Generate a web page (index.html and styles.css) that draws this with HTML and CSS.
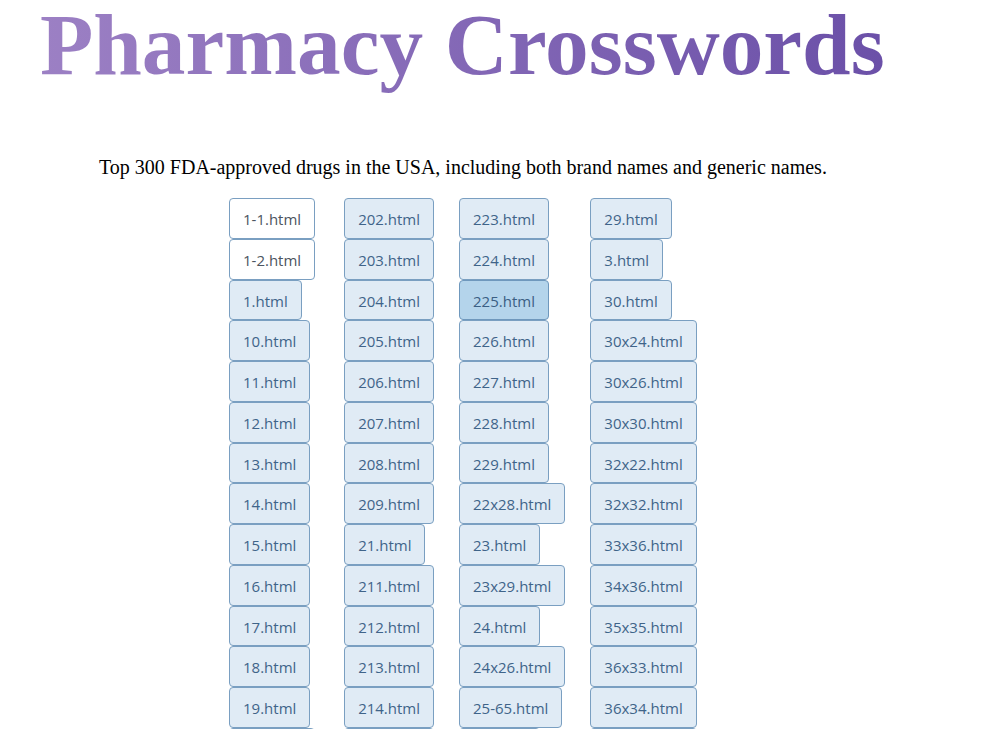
FILE: index.html
```html
<!DOCTYPE html>
<html lang="en">
<head>
<meta charset="utf-8">
<title>Pharmacy Crosswords</title>
<link rel="stylesheet" href="styles.css">
</head>
<body>
<header class="masthead">
  <h1 class="title">Pharmacy Crosswords</h1>
</header>
<p class="intro">Top 300 FDA-approved drugs in the USA, including both brand names and generic names.</p>
<main class="files">
  <ul class="col">
    <li><a class="file seen" href="1-1.html">1-1.html</a></li>
    <li><a class="file seen" href="1-2.html">1-2.html</a></li>
    <li><a class="file" href="1.html">1.html</a></li>
    <li><a class="file" href="10.html">10.html</a></li>
    <li><a class="file" href="11.html">11.html</a></li>
    <li><a class="file" href="12.html">12.html</a></li>
    <li><a class="file" href="13.html">13.html</a></li>
    <li><a class="file" href="14.html">14.html</a></li>
    <li><a class="file" href="15.html">15.html</a></li>
    <li><a class="file" href="16.html">16.html</a></li>
    <li><a class="file" href="17.html">17.html</a></li>
    <li><a class="file" href="18.html">18.html</a></li>
    <li><a class="file" href="19.html">19.html</a></li>
    <li><a class="file" href="2-1.html">2-1.html</a></li>
  </ul>
  <ul class="col">
    <li><a class="file" href="202.html">202.html</a></li>
    <li><a class="file" href="203.html">203.html</a></li>
    <li><a class="file" href="204.html">204.html</a></li>
    <li><a class="file" href="205.html">205.html</a></li>
    <li><a class="file" href="206.html">206.html</a></li>
    <li><a class="file" href="207.html">207.html</a></li>
    <li><a class="file" href="208.html">208.html</a></li>
    <li><a class="file" href="209.html">209.html</a></li>
    <li><a class="file" href="21.html">21.html</a></li>
    <li><a class="file" href="211.html">211.html</a></li>
    <li><a class="file" href="212.html">212.html</a></li>
    <li><a class="file" href="213.html">213.html</a></li>
    <li><a class="file" href="214.html">214.html</a></li>
    <li><a class="file" href="215.html">215.html</a></li>
  </ul>
  <ul class="col">
    <li><a class="file" href="223.html">223.html</a></li>
    <li><a class="file" href="224.html">224.html</a></li>
    <li><a class="file active" href="225.html">225.html</a></li>
    <li><a class="file" href="226.html">226.html</a></li>
    <li><a class="file" href="227.html">227.html</a></li>
    <li><a class="file" href="228.html">228.html</a></li>
    <li><a class="file" href="229.html">229.html</a></li>
    <li><a class="file" href="22x28.html">22x28.html</a></li>
    <li><a class="file" href="23.html">23.html</a></li>
    <li><a class="file" href="23x29.html">23x29.html</a></li>
    <li><a class="file" href="24.html">24.html</a></li>
    <li><a class="file" href="24x26.html">24x26.html</a></li>
    <li><a class="file" href="25-65.html">25-65.html</a></li>
    <li><a class="file" href="25.html">25.html</a></li>
  </ul>
  <ul class="col">
    <li><a class="file" href="29.html">29.html</a></li>
    <li><a class="file" href="3.html">3.html</a></li>
    <li><a class="file" href="30.html">30.html</a></li>
    <li><a class="file" href="30x24.html">30x24.html</a></li>
    <li><a class="file" href="30x26.html">30x26.html</a></li>
    <li><a class="file" href="30x30.html">30x30.html</a></li>
    <li><a class="file" href="32x22.html">32x22.html</a></li>
    <li><a class="file" href="32x32.html">32x32.html</a></li>
    <li><a class="file" href="33x36.html">33x36.html</a></li>
    <li><a class="file" href="34x36.html">34x36.html</a></li>
    <li><a class="file" href="35x35.html">35x35.html</a></li>
    <li><a class="file" href="36x33.html">36x33.html</a></li>
    <li><a class="file" href="36x34.html">36x34.html</a></li>
    <li><a class="file" href="36x36.html">36x36.html</a></li>
  </ul>
</main>
</body>
</html>
```

FILE: styles.css
```css
html, body {
  margin: 0;
  padding: 0;
  background: #ffffff;
}

body {
  font-family: "Liberation Serif", "Times New Roman", serif;
  color: #000;
  overflow: hidden;
}

.masthead {
  height: 111px;
  padding: 2px 0 0 40px;
  box-sizing: border-box;
}

/* gradient-filled heading; bottom padding keeps the descenders painted */
.title {
  display: inline-block;
  margin: 0;
  padding-bottom: 20px;
  font-family: "Liberation Serif", "Times New Roman", serif;
  font-weight: bold;
  font-size: 87.3px;
  line-height: 86px;
  background: linear-gradient(to right, #9c80c4, #6b50a8);
  -webkit-background-clip: text;
  background-clip: text;
  color: transparent;
}

.intro {
  margin: 44px 0 0 99px;
  font-size: 20px;
  line-height: 24px;
}

.files {
  display: flex;
  align-items: flex-start;
  gap: 25px;
  margin: 19px 0 0 229px;
}

.col {
  list-style: none;
  margin: 0;
  padding: 0;
  display: flex;
  flex-direction: column;
  align-items: flex-start;
}

.col:first-child {
  margin-right: 4px;
}

.file {
  display: block;
  padding: 2px 13px 0;
  line-height: 36.75px;
  font-family: "Open Sans", "Noto Sans", sans-serif;
  font-size: 15px;
  color: #3f6489;
  text-decoration: none;
  background: #e0ebf5;
  border: 1px solid #7a9fc1;
  border-radius: 4px;
  white-space: nowrap;
}

.file.seen {
  background: #ffffff;
  color: #4c5560;
}

.file.active {
  background: #b4d4eb;
  border-color: #6f98bd;
  color: #3b5f84;
}
```
